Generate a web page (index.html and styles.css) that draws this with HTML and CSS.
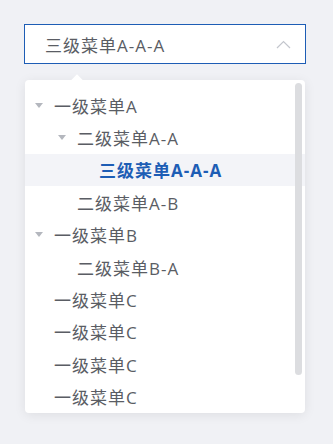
FILE: index.html
```html
<!DOCTYPE html>
<html lang="zh-CN">
<head>
    <meta charset="UTF-8">
    <meta name="viewport" content="width=device-width, initial-scale=1.0">
    <title>Tree Select</title>
    <link rel="stylesheet" href="styles.css">
</head>
<body>
    <div class="tree-select">
        <div class="select-input">
            <span class="select-value">三级菜单A-A-A</span>
            <svg class="select-arrow" width="15" height="9" viewBox="0 0 15 9">
                <polyline points="1,8 7.5,1.5 14,8" fill="none" stroke="#c3c6cd" stroke-width="1.2"/>
            </svg>
        </div>

        <div class="dropdown">
            <span class="popper-arrow"></span>
            <ul class="tree">
                <li class="node level-1"><i class="caret"></i><span>一级菜单A</span></li>
                <li class="node level-2"><i class="caret"></i><span>二级菜单A-A</span></li>
                <li class="node level-3 selected"><i class="caret empty"></i><span>三级菜单A-A-A</span></li>
                <li class="node level-2"><i class="caret empty"></i><span>二级菜单A-B</span></li>
                <li class="node level-1"><i class="caret"></i><span>一级菜单B</span></li>
                <li class="node level-2"><i class="caret empty"></i><span>二级菜单B-A</span></li>
                <li class="node level-1"><i class="caret empty"></i><span>一级菜单C</span></li>
                <li class="node level-1"><i class="caret empty"></i><span>一级菜单C</span></li>
                <li class="node level-1"><i class="caret empty"></i><span>一级菜单C</span></li>
                <li class="node level-1"><i class="caret empty"></i><span>一级菜单C</span></li>
            </ul>
            <div class="scrollbar"></div>
        </div>
    </div>
</body>
</html>
```

FILE: styles.css
```css
body {
    margin: 0;
    padding: 24px;
    background: #f0f1f5;
    font-family: "Open Sans", "Noto Sans CJK SC", sans-serif;
    color: #5a5d64;
    letter-spacing: 1px;
}

/* Поле выбора */
.tree-select {
    width: 282px;
}

.select-input {
    height: 40px;
    box-sizing: border-box;
    border: 1px solid #1d5db5;
    background: #fff;
    display: flex;
    align-items: center;
    justify-content: space-between;
    padding: 0 14px 0 20px;
    font-size: 17px;
}

.select-arrow {
    display: block;
}

/* Выпадающий список */
.dropdown {
    position: relative;
    margin: 16px 1px 0;
    height: 333px;
    background: #fff;
    border-radius: 4px;
    box-shadow: 0 2px 12px rgba(0,0,0,0.08);
}

.popper-arrow {
    position: absolute;
    top: -4px;
    left: 48px;
    width: 8px;
    height: 8px;
    background: #fff;
    transform: rotate(45deg);
}

.tree {
    list-style: none;
    margin: 0;
    padding: 9px 0 0;
    height: 100%;
    box-sizing: border-box;
    overflow: hidden;
    border-radius: 4px;
    position: relative;
}

.node {
    height: 32.4px;
    display: flex;
    align-items: center;
    font-size: 17px;
    white-space: nowrap;
}

.level-1 { padding-left: 10px; }
.level-2 { padding-left: 33px; }
.level-3 { padding-left: 55px; }

.caret {
    width: 0;
    height: 0;
    border-left: 4.5px solid transparent;
    border-right: 4.5px solid transparent;
    border-top: 5px solid #b4b7be;
    margin-right: 11px;
}

.caret.empty {
    border-top-color: transparent;
}

.selected {
    background: #f3f4f8;
    color: #1d5db5;
    font-weight: bold;
}

.scrollbar {
    position: absolute;
    top: 3px;
    right: 3px;
    width: 7px;
    height: 292px;
    background: #dcdde0;
    border-radius: 4px;
}
```
